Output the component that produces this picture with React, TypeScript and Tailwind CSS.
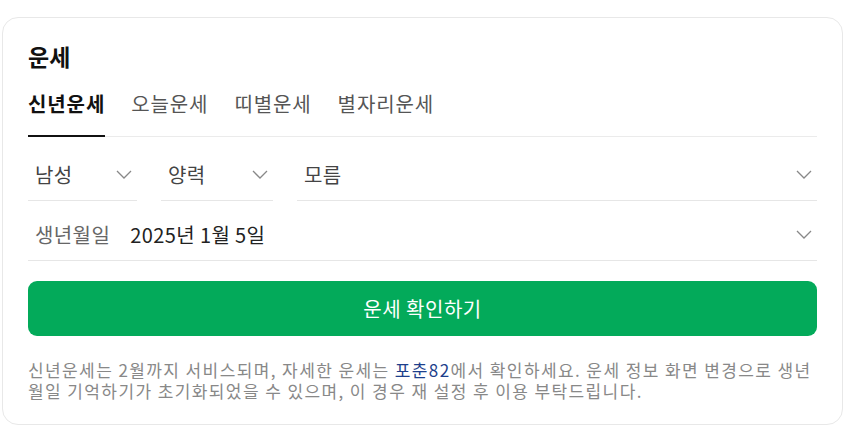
import React from 'react';

const FONT = { fontFamily: '"Noto Sans CJK KR", "Noto Sans", sans-serif' };

function Chevron() {
  return (
    <svg width="16" height="9" viewBox="0 0 16 9" fill="none" className="shrink-0">
      <polyline points="1,1 8,8 15,1" stroke="#888" strokeWidth="1.3" fill="none" />
    </svg>
  );
}

function Select({ value, className }: { value: string; className: string }) {
  return (
    <div className={`h-[52px] flex items-center justify-between pl-[7px] pr-[5px] border-b border-[#e6e6e6] ${className}`}>
      <span className="text-[20px] tracking-[0.3px] text-[#444]">{value}</span>
      <Chevron />
    </div>
  );
}

export default function App() {
  const tabs = ['신년운세', '오늘운세', '띠별운세', '별자리운세'];

  return (
    <div className="w-[848px] h-[426px] bg-white pt-[17px] pl-[2px]" style={FONT}>
      <div className="w-[841px] h-[408px] border border-[#e8e8e8] rounded-[16px] pl-[25px] pr-[25px] pt-[23px]">
        {/* Title */}
        <h2 className="text-[23px] font-bold leading-[30px] text-[#111]">운세</h2>

        {/* Tabs */}
        <div className="flex gap-[26px] mt-[19px] border-b border-[#ebebeb]">
          {tabs.map((t, i) => (
            <div
              key={t}
              className={`text-[20px] tracking-[0.9px] leading-[28px] pb-[17px] -mb-px border-b-2 ${
                i === 0 ? 'font-bold text-[#111] border-[#111]' : 'text-[#555] border-transparent'
              }`}
            >
              {t}
            </div>
          ))}
        </div>

        {/* Selects */}
        <div className="flex gap-[24px] mt-[12px]">
          <Select value="남성" className="w-[109px]" />
          <Select value="양력" className="w-[112px]" />
          <Select value="모름" className="flex-1" />
        </div>

        <div className="h-[52px] mt-[8px] flex items-center justify-between pl-[7px] pr-[5px] border-b border-[#e6e6e6]">
          <div className="flex items-center gap-[20px] tracking-[0.4px]">
            <span className="text-[20px] text-[#666]">생년월일</span>
            <span className="text-[20px] text-[#222]">2025년 1월 5일</span>
          </div>
          <Chevron />
        </div>

        {/* Button */}
        <button className="w-full h-[55px] mt-[20px] rounded-[9px] bg-[#03aa5a] text-white text-[20px] tracking-[0.5px] flex items-center justify-center">
          운세 확인하기
        </button>

        {/* Note */}
        <p className="mt-[23px] text-[17px] tracking-[1.4px] leading-[21px] text-[#888] break-all">
          신년운세는 2월까지 서비스되며, 자세한 운세는 <span className="text-[#1d3f8c]">포춘82</span>에서 확인하세요. 운세 정보 화면 변경으로 생년월일 기억하기가 초기화되었을 수 있으며, 이 경우 재 설정 후 이용 부탁드립니다.
        </p>
      </div>
    </div>
  );
}
